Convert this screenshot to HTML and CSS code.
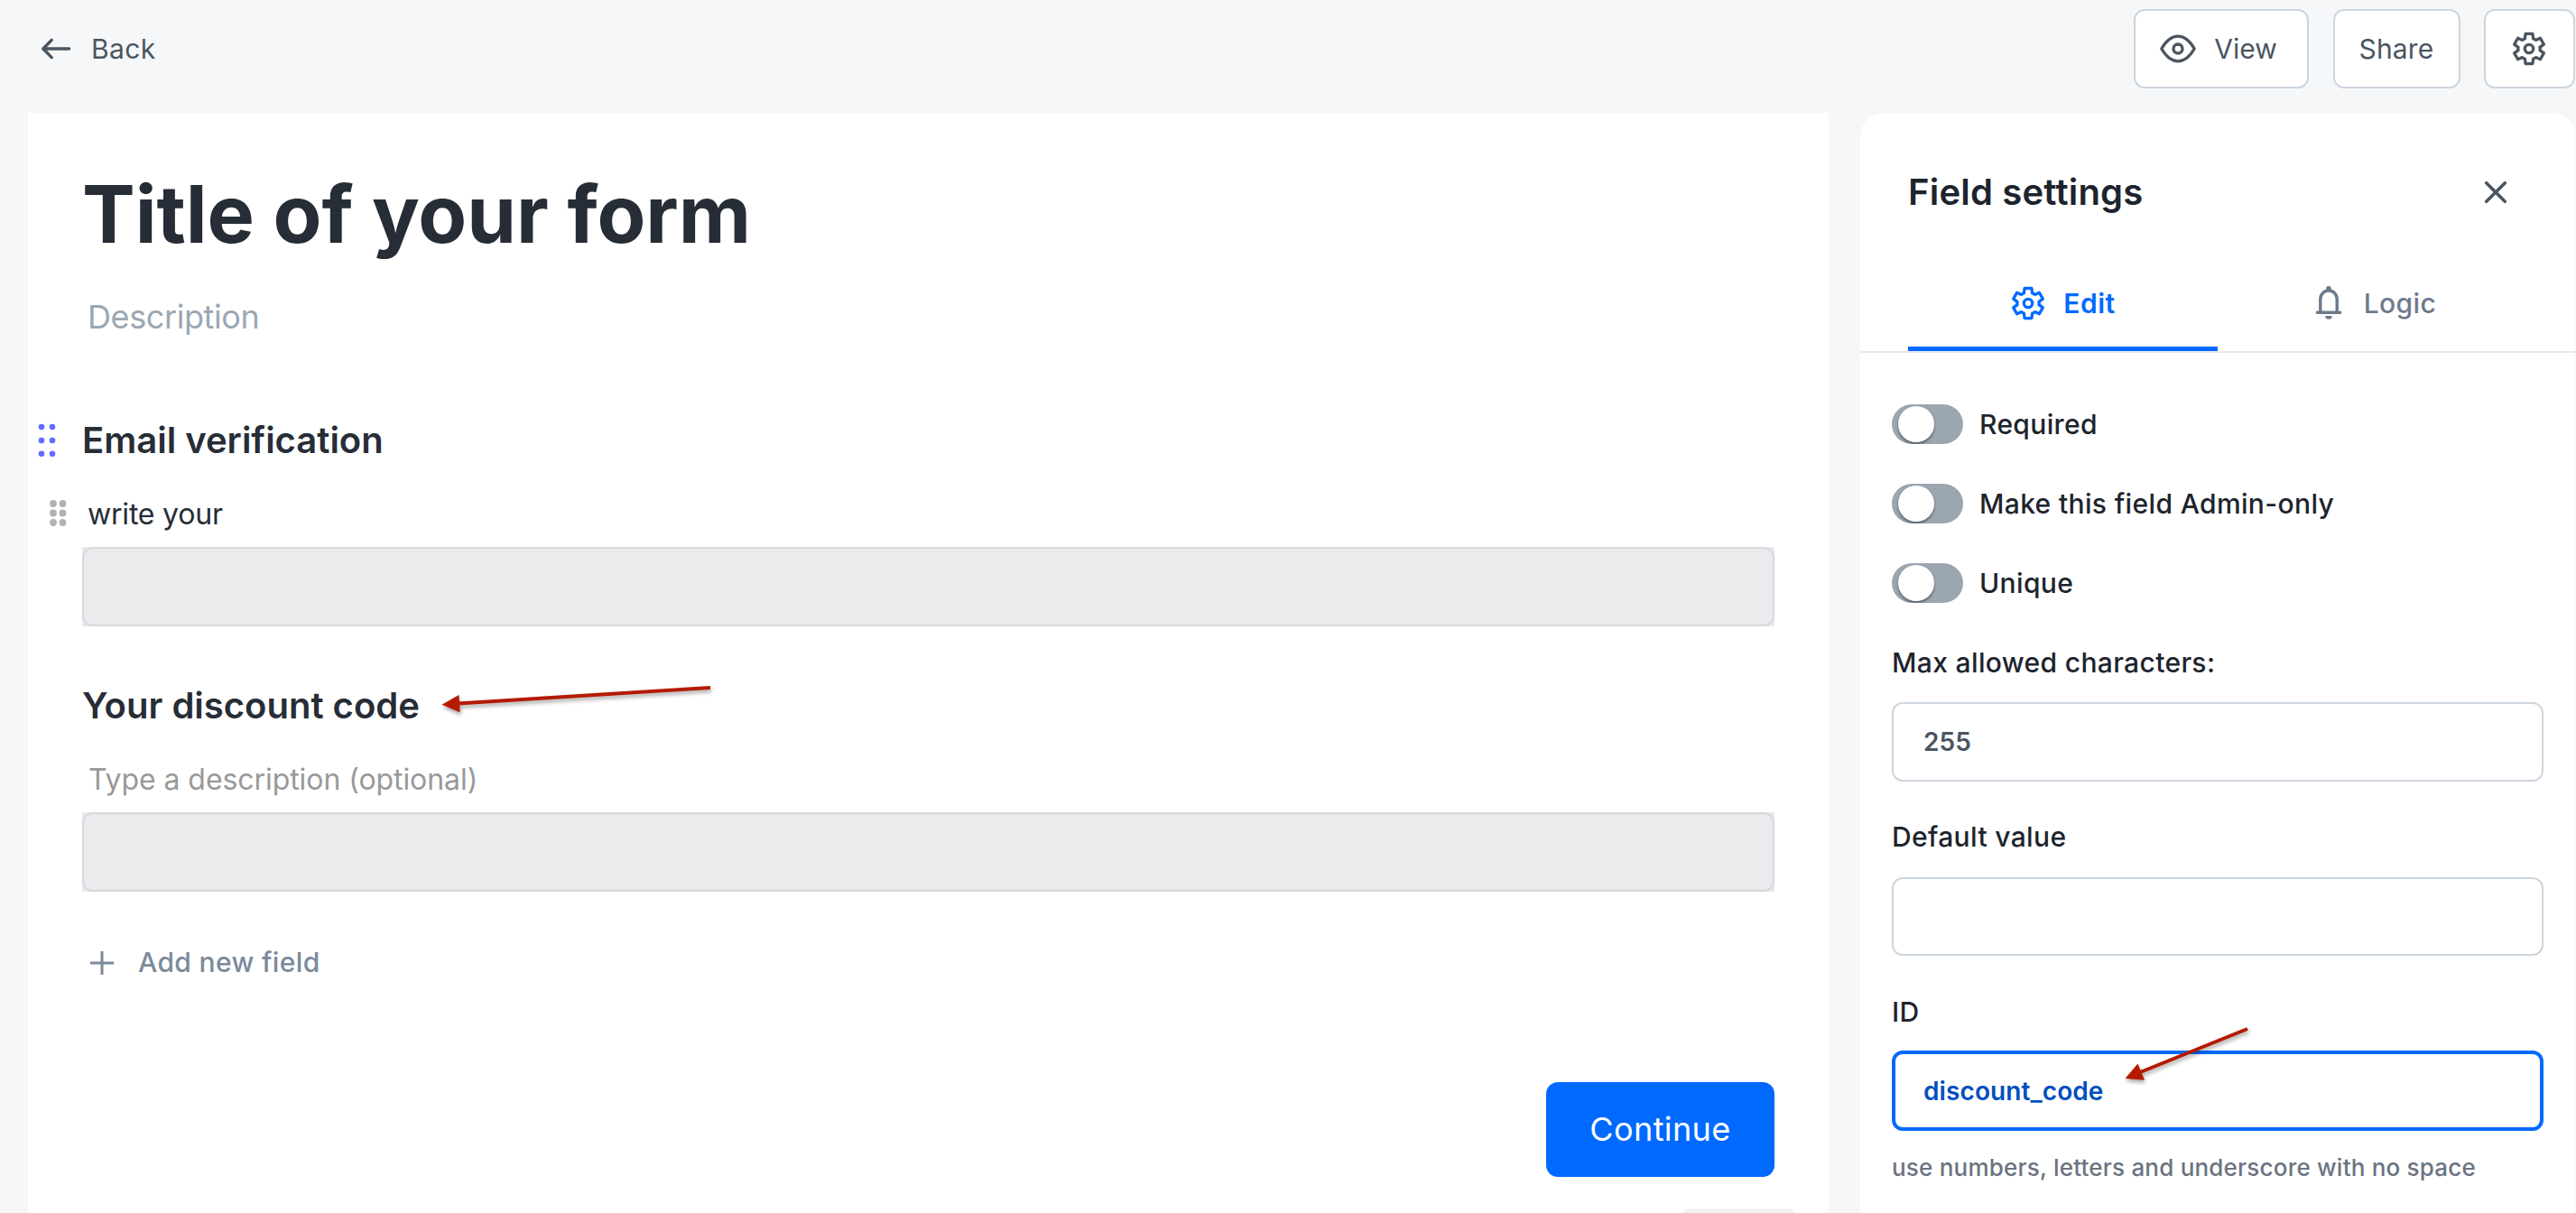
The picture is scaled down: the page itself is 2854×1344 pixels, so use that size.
FILE: index.html
```html
<!DOCTYPE html>
<html lang="en">
<head>
<meta charset="utf-8">
<title>Form editor</title>
<link rel="stylesheet" href="styles.css">
</head>
<body>
<svg class="sprite" aria-hidden="true">
  <symbol id="gear" viewBox="-20 -20 40 40">
    <path d="M-4.6-11.2-3.9-16.6H3.9L4.6-11.2Q6-10.9 7.4-9.6L12.4-11.7 16.3-4.9 12-1.6Q12.4 0 12 1.6L16.3 4.9 12.4 11.7 7.4 9.6Q6 10.9 4.6 11.2L3.9 16.6H-3.9L-4.6 11.2Q-6 10.9-7.4 9.6L-12.4 11.7-16.3 4.9-12 1.6Q-12.4 0-12-1.6L-16.3-4.9-12.4-11.7-7.4-9.6Q-6-10.9-4.6-11.2Z"/>
    <circle r="4.7"/>
  </symbol>
</svg>
<div class="app">
  <header class="topbar">
    <a class="back">
      <svg class="back-icon" viewBox="0 0 34 26"><path d="M31.6 13H3M12.2 3.4 2.8 13l9.4 9.6"/></svg>
      <span>Back</span>
    </a>
    <nav class="actions">
      <button class="btn btn-view">
        <svg class="eye" viewBox="0 0 42 34"><path d="M2.8 17C7.5 9 14 3.2 21 3.2S34.500 9 39.200 17C34.500 25 28 30.800 21 30.800S7.500 25 2.800 17Z"/><circle cx="21" cy="17" r="5"/></svg>
        <span>View</span>
      </button>
      <button class="btn btn-share">Share</button>
      <button class="btn btn-gear"><svg class="gear"><use href="#gear"/></svg></button>
    </nav>
  </header>

  <div class="columns">
    <main class="form">
      <h1 class="title">Title of your form</h1>
      <p class="subtitle">Description</p>

      <section class="field field-first">
        <svg class="handle" viewBox="0 0 60 48"><g fill="#636bff"><circle cx="15" cy="10" r="3.300"/><circle cx="27" cy="10" r="3.300"/><circle cx="15" cy="25" r="3.300"/><circle cx="27" cy="25" r="3.300"/><circle cx="15" cy="39.700" r="3.300"/><circle cx="27" cy="39.700" r="3.300"/></g></svg>
        <h2 class="field-title">Email verification</h2>
        <svg class="handle handle-note" viewBox="0 0 60 40"><g fill="#b1b1b1"><circle cx="28" cy="9" r="3.900"/><circle cx="38.500" cy="9" r="3.900"/><circle cx="28" cy="19.500" r="3.900"/><circle cx="38.500" cy="19.500" r="3.900"/><circle cx="28" cy="30" r="3.900"/><circle cx="38.500" cy="30" r="3.900"/></g></svg>
        <p class="note">write your</p>
        <div class="answer"><div class="answer-box"></div></div>
      </section>

      <section class="field">
        <h2 class="field-title">Your discount code</h2>
        <p class="note note-empty">Type a description (optional)</p>
        <div class="answer"><div class="answer-box"></div></div>
      </section>

      <div class="add">
        <svg class="plus" viewBox="0 0 28 28"><path d="M14 1v26M1 14h26"/></svg>
        <span>Add new field</span>
      </div>
      <button class="continue">Continue</button>
      <div class="badge"></div>
    </main>

    <aside class="settings">
      <div class="settings-head">
        <h3>Field settings</h3>
        <svg class="close" viewBox="0 0 28 28"><path d="M3.700 3.700l20.600 20.600M24.300 3.700 3.700 24.300"/></svg>
      </div>
      <div class="tabs">
        <div class="tab tab-active"><svg class="gear"><use href="#gear"/></svg><span>Edit</span></div>
        <div class="tab tab-logic">
          <svg class="bell" viewBox="0 0 36 38"><path d="M8.800 29V14.200a9.200 9.200 0 0 1 18.400 0V29M5.300 29.200h25.400"/><path class="solid" d="M15 4.500a3 4.700 0 0 1 6 0zM14.200 33h7.600a3.800 3.800 0 0 1-7.600 0z"/></svg>
          <span>Logic</span>
        </div>
      </div>
      <div class="settings-body">
        <div class="toggles">
          <label class="toggle"><span class="track"><span class="knob"></span></span>Required</label>
          <label class="toggle"><span class="track"><span class="knob"></span></span>Make this field Admin-only</label>
          <label class="toggle"><span class="track"><span class="knob"></span></span>Unique</label>
        </div>
        <div class="setting">
          <div class="label">Max allowed characters:</div>
          <div class="input">255</div>
        </div>
        <div class="setting setting-default">
          <div class="label">Default value</div>
          <div class="input"></div>
        </div>
        <div class="setting setting-id">
          <div class="label">ID</div>
          <div class="input input-focus">discount_code</div>
        </div>
        <p class="hint">use numbers, letters and underscore with no space</p>
      </div>
    </aside>
  </div>

  <svg class="arrows" viewBox="0 0 2854 1344">
    <path class="shaft" d="M787 762 507 779.600M2490 1140 2370 1188.500"/>
    <path class="head" d="M489.500 780.800 508.500 770 509.700 789.300ZM2354.500 1195 2368.500 1178.500 2376 1196.800Z"/>
  </svg>
</div>
</body>
</html>
```
FILE: styles.css
```css
* { box-sizing: border-box; }
body {
  margin: 0;
  background: #f5f7f9;
  font-family: Inter, "Liberation Sans", sans-serif;
  color: #272d36;
}
h1, h2, h3, p { margin: 0; }
button { font-family: inherit; padding: 0; }
svg { fill: none; stroke: currentColor; flex: none; }
.sprite { display: none; }
.app {
  position: relative;
  width: 2854px;
  height: 1344px;
  overflow: hidden;
}

/* top bar */
.topbar {
  display: flex;
  justify-content: space-between;
  align-items: flex-start;
  height: 125px;
  padding: 10px 1px 0 45px;
}
.back {
  display: flex;
  align-items: center;
  gap: 22px;
  height: 88px;
  font-size: 30px;
  letter-spacing: 0.4px;
  color: #4a5561;
}
.back-icon {
  width: 34px;
  height: 26px;
  stroke-width: 3.4;
  stroke-linecap: round;
  stroke-linejoin: round;
}
.actions { display: flex; }
.btn {
  display: flex;
  align-items: center;
  justify-content: center;
  height: 88px;
  border: 2px solid #cdd5de;
  border-radius: 12px;
  background: #fff;
  font-size: 30px;
  color: #4a5561;
}
.btn-view { width: 194px; margin-right: 27px; padding-right: 7px; gap: 19px; }
.btn-share { width: 141px; margin-right: 26px; padding-right: 1px; letter-spacing: 0.2px; }
.btn-gear { width: 101px; padding-right: 1px; }
.eye { width: 42px; height: 34px; stroke-width: 3.3; stroke-linejoin: round; }
.gear { width: 40px; height: 40px; stroke-width: 3.3; stroke-linejoin: round; }

/* columns */
.columns {
  display: flex;
  gap: 35px;
  height: 1219px;
  padding: 0 1px 0 31px;
}
.form {
  display: flex;
  flex-direction: column;
  width: 1995px;
  padding: 60px 60px 0;
  background: #fff;
  overflow: hidden;
}
.form > * { flex: none; }
.title { font-size: 88px; line-height: 104px; font-weight: 700; letter-spacing: -0.1px; }
.subtitle {
  margin-top: 40px;
  padding-left: 6px;
  font-size: 36px;
  line-height: 44px;
  letter-spacing: -0.4px;
  color: #9ba7b4;
}
.field {
  display: grid;
  grid-template-columns: 60px 1fr;
  margin: 63px 0 0 -60px;
}
.field-first { margin-top: 90px; }
.handle { width: 60px; height: 48px; stroke: none; }
.handle-note { height: 40px; margin-top: 38px; }
.field-title, .note, .answer { grid-column: 2; }
.field-title { height: 48px; font-size: 40px; line-height: 50px; font-weight: 600; }
.note {
  height: 40px;
  margin-top: 38px;
  padding-left: 6px;
  font-size: 32px;
  line-height: 42px;
  letter-spacing: -0.2px;
}
.note-empty { padding-left: 7px; letter-spacing: -0.07px; color: #999; }
.answer { margin-top: 17px; background: #e7eaed; }
.answer-box {
  height: 88px;
  border: 2px solid #d5dadf;
  border-radius: 12px;
  background: #eaebed;
}
.add {
  display: flex;
  align-items: center;
  gap: 26px;
  height: 40px;
  margin-top: 58px;
  padding-left: 8px;
  font-size: 30px;
  font-weight: 500;
  letter-spacing: 0.36px;
  color: #7c8a9a;
}
.plus { width: 28px; height: 28px; margin-top: 2px; stroke-width: 3; }
.continue {
  align-self: flex-end;
  width: 253px;
  height: 105px;
  margin-top: 113px;
  padding-bottom: 1px;
  border: 0;
  border-radius: 13px;
  background: #006aff;
  color: #fff;
  font-size: 36px;
  letter-spacing: 0.4px;
}
.badge {
  align-self: flex-end;
  width: 126px;
  height: 40px;
  margin: 35px -24px 0 0;
  border-radius: 8px;
  background: #f1f2f3;
}

/* settings panel */
.settings {
  width: 792px;
  padding-top: 60px;
  border-radius: 26px 26px 0 0;
  background: #fff;
}
.settings-head {
  display: flex;
  align-items: center;
  justify-content: space-between;
  height: 56px;
  padding: 0 74px 0 53px;
}
.settings-head h3 {
  font-size: 40px;
  line-height: 48px;
  padding-bottom: 1px;
  font-weight: 600;
  letter-spacing: 0.2px;
  color: #1d242d;
}
.close { width: 28px; height: 28px; stroke-width: 3.6; stroke-linecap: round; color: #4a5561; }
.tabs {
  display: grid;
  grid-template-columns: 1fr 1fr;
  height: 104px;
  margin-top: 46px;
  padding: 0 53px;
  border-bottom: 2px solid #e7e9ed;
}
.tab {
  display: flex;
  align-items: center;
  justify-content: center;
  gap: 19px;
  height: 102px;
  padding-bottom: 4px;
  font-size: 30px;
}
.tab-active {
  font-weight: 600;
  letter-spacing: 0.5px;
  color: #006aff;
  box-shadow: inset 0 -5px #006aff;
}
.tab-logic {
  gap: 21px;
  padding-left: 4px;
  font-weight: 500;
  letter-spacing: 0.4px;
  color: #6c7a8b;
}
.bell { width: 36px; height: 38px; stroke-width: 3.4; }
.bell path { stroke-linecap: round; }
.bell .solid { fill: currentColor; stroke: none; }
.settings-body { padding: 57px 35px 0; color: #1d242d; }
.toggles { display: flex; flex-direction: column; gap: 44px; }
.toggle {
  display: flex;
  align-items: center;
  gap: 18px;
  height: 44px;
  font-size: 30px;
  font-weight: 500;
  letter-spacing: 0.36px;
}
.track {
  width: 79px;
  height: 44px;
  padding: 2px 7px;
  border-radius: 22px;
  background: #9ca6b1;
  overflow: hidden;
}
.knob {
  display: block;
  width: 40px;
  height: 40px;
  border-radius: 50%;
  background: #fff;
  box-shadow: 0 2px 3px rgba(0, 0, 0, 0.45);
}
.setting {
  display: flex;
  flex-direction: column;
  gap: 24px;
  margin-top: 46px;
}
.setting-default { gap: 25px; margin-top: 41px; }
.setting-id { gap: 23px; margin-top: 42px; }
.label {
  font-size: 30px;
  line-height: 40px;
  font-weight: 500;
  letter-spacing: 0.36px;
}
.input {
  display: flex;
  align-items: center;
  height: 88px;
  padding: 0 33px;
  border: 2px solid #cdd5de;
  border-radius: 12px;
  font-size: 28px;
  font-weight: 600;
  letter-spacing: 0.1px;
  color: #4a5561;
}
.setting-default .input { height: 87px; }
.setting-id .input-focus {
  height: 89px;
  padding: 0 31px;
  border: 4px solid #006aff;
  color: #004fbe;
}
.hint {
  margin-top: 21px;
  font-size: 26px;
  line-height: 40px;
  font-weight: 500;
  letter-spacing: 0.21px;
  color: #6a7381;
}

/* pointer arrows drawn over the page */
.arrows {
  position: absolute;
  inset: 0;
  width: 2854px;
  height: 1344px;
  filter: drop-shadow(1px 3px 2px rgba(0, 0, 0, 0.35));
}
.arrows .shaft { stroke: #b51a00; stroke-width: 4; }
.arrows .head { fill: #b51a00; stroke: none; }
```
